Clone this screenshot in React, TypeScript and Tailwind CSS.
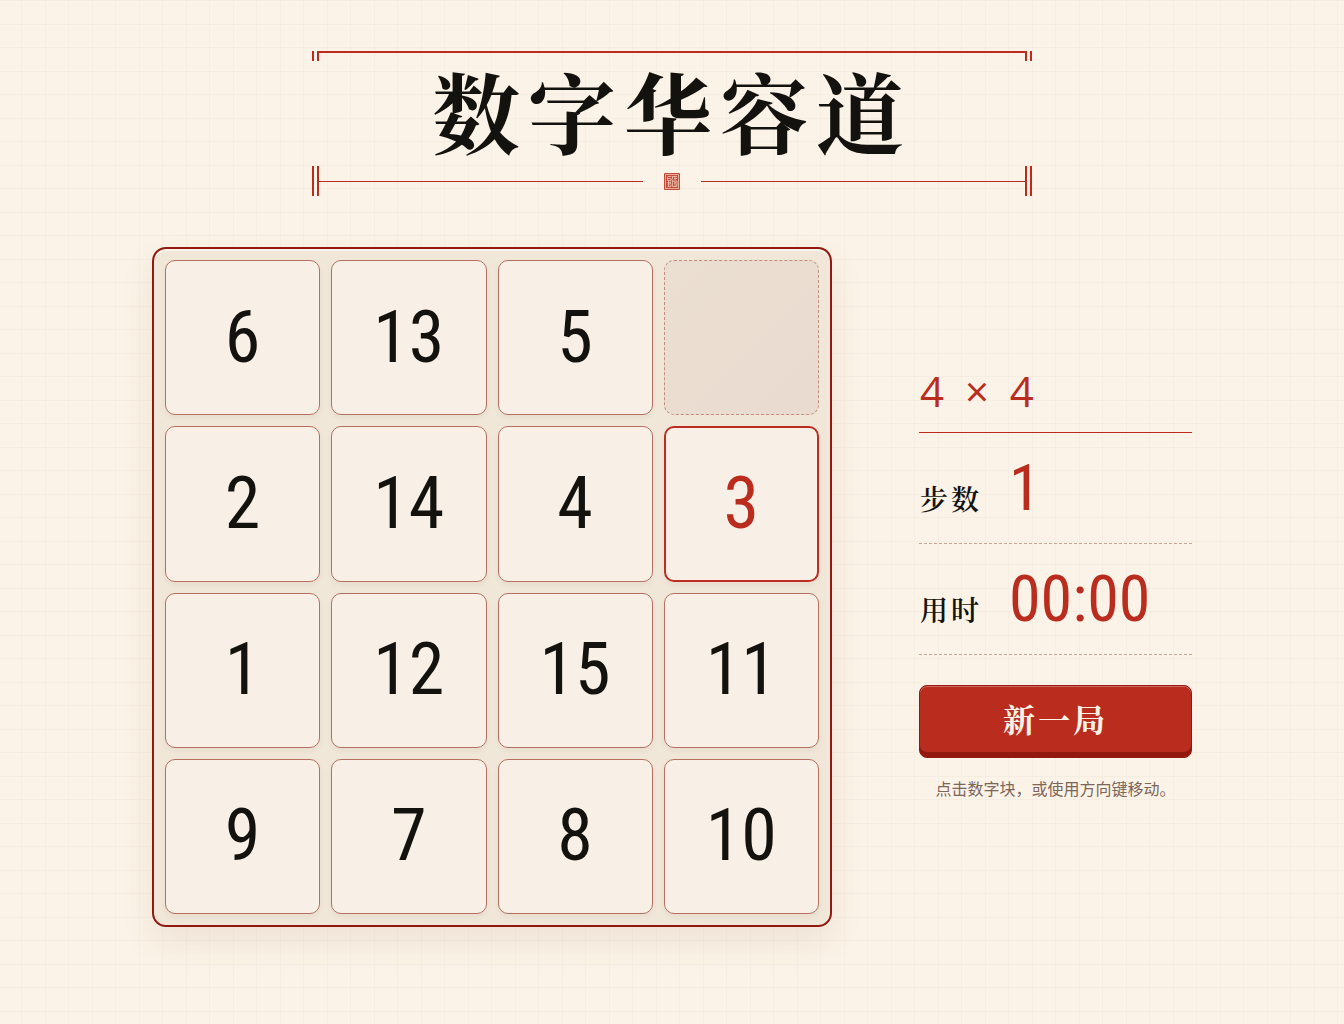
import { useCallback, useEffect, useState } from "react";

const SIZE = 4;
const START = [6, 13, 5, 0, 2, 14, 4, 3, 1, 12, 15, 11, 9, 7, 8, 10];

const areNeighbours = (a: number, b: number) => {
  const rows = Math.abs(Math.floor(a / SIZE) - Math.floor(b / SIZE));
  const cols = Math.abs((a % SIZE) - (b % SIZE));
  return rows + cols === 1;
};

function Posts({ className }: { className: string }) {
  return <span aria-hidden="true" className={`w-[7px] shrink-0 border-x-2 border-[#b92c1e] ${className}`} />;
}

function Seal() {
  return (
    <svg viewBox="0 0 16 17" className="mx-[21px] h-[17px] w-4 shrink-0" fill="none" aria-hidden="true">
      <rect width="16" height="17" rx="1" fill="#c64a3b" />
      <path
        d="M1.5 1.5h13v14h-13z M4 3.5h3.5 M3.5 5.5h3 M3.5 3.5v4h3.5v-2 M3.5 9.5h3 M4.5 8v6 M6.5 8.5v2.5h-3 M3.5 13.5h3.5v-2 M9 3.5h4 M10 5.5h3 M11 2.5v4.5 M8.5 3v3.5 M8.5 8v5.5h4.500V8z M10 10h2 M10 12h3 M11 8v3 M7.500 6.500l1.500 2"
        stroke="#ecc9b4"
        strokeWidth=".8"
      />
    </svg>
  );
}

function Header() {
  return (
    <header className="mx-auto w-full max-w-[720px]">
      <div className="flex items-start" aria-hidden="true">
        <Posts className="h-[10px]" />
        <span className="h-0.5 flex-1 bg-[#b92c1e]" />
        <Posts className="h-[10px]" />
      </div>
      <h1 className="pb-2 text-center text-[88px] leading-[97px] font-bold tracking-[8px] whitespace-nowrap">
        数字华容道
      </h1>
      <div className="flex items-center">
        <Posts className="h-[30px]" />
        <span className="h-px flex-1 bg-[#b92c1e]" />
        <Seal />
        <span className="h-px flex-1 bg-[#b92c1e]" />
        <Posts className="h-[30px]" />
      </div>
    </header>
  );
}

function Stat({ label, value }: { label: string; value: string }) {
  return (
    <div className="flex h-[111px] items-baseline border-b border-dashed border-[#cda597] pt-4">
      <dt className="w-[90px] pl-px text-[28px] leading-[80px] font-semibold tracking-[3px]">{label}</dt>
      <dd className="font-['Roboto_Condensed','Roboto',sans-serif] text-[64px] leading-[80px] text-[#b92c1e]">
        {value}
      </dd>
    </div>
  );
}

export default function App() {
  const [tiles, setTiles] = useState(START);
  const [moves, setMoves] = useState(1);
  const [last, setLast] = useState(3);
  const [seconds, setSeconds] = useState(0);
  const [running, setRunning] = useState(false);

  const move = useCallback(
    (index: number) => {
      const gap = tiles.indexOf(0);
      if (index < 0 || index >= tiles.length || !areNeighbours(index, gap)) return;
      const next = [...tiles];
      next[gap] = tiles[index];
      next[index] = 0;
      setTiles(next);
      setLast(tiles[index]);
      setMoves((n) => n + 1);
      setRunning(true);
    },
    [tiles],
  );

  useEffect(() => {
    const onKey = (e: KeyboardEvent) => {
      const offsets: Record<string, number> = { ArrowUp: SIZE, ArrowDown: -SIZE, ArrowLeft: 1, ArrowRight: -1 };
      if (e.key in offsets) {
        e.preventDefault();
        move(tiles.indexOf(0) + offsets[e.key]);
      }
    };
    window.addEventListener("keydown", onKey);
    return () => window.removeEventListener("keydown", onKey);
  }, [move, tiles]);

  useEffect(() => {
    if (!running) return;
    const id = window.setInterval(() => setSeconds((s) => s + 1), 1000);
    return () => window.clearInterval(id);
  }, [running]);

  const restart = () => {
    const next = [...START];
    for (let i = 0; i < 200; i++) {
      const gap = next.indexOf(0);
      const options = next.map((_, k) => k).filter((k) => areNeighbours(k, gap));
      const pick = options[Math.floor(Math.random() * options.length)];
      [next[gap], next[pick]] = [next[pick], next[gap]];
    }
    setTiles(next);
    setMoves(0);
    setLast(-1);
    setSeconds(0);
    setRunning(false);
  };

  const clock = [Math.floor(seconds / 60), seconds % 60].map((n) => String(n).padStart(2, "0")).join(":");

  return (
    <div
      lang="zh-CN"
      className="min-h-screen bg-[#fbf3e7] bg-[linear-gradient(#f6ede1_1px,transparent_1px),linear-gradient(#f6ede1_1px,transparent_1px),linear-gradient(90deg,#f7eee3_1px,transparent_1px),linear-gradient(90deg,#f7eee3_1px,transparent_1px)] bg-[size:47px_47px] bg-[position:0_0,0_24px,21px_0,45px_0] px-6 pt-[51px] pb-24 font-['Noto_Serif_CJK_SC','Noto_Sans_CJK_SC',serif] text-[#14120e]"
    >
      <Header />
      <main className="mx-auto mt-[51px] flex max-w-[1040px] flex-col items-center gap-x-[87px] gap-y-10 lg:flex-row">
        <div
          role="group"
          aria-label="棋盘"
          className="grid aspect-square w-full max-w-[680px] grid-cols-4 grid-rows-4 gap-[11px] rounded-[14px] border-2 border-[#92190f] bg-[#f0e7d9] p-[11px] shadow-[0_14px_32px_rgba(120,80,50,0.1),inset_0_2px_1px_rgba(255,250,240,0.8)]"
        >
          {tiles.map((n, i) =>
            n === 0 ? (
              <div
                key={n}
                className="rounded-[10px] border border-dashed border-[#c48d7e] bg-[#eaddd0] bg-linear-135 from-[#ebdfd2] to-[#e9dbcf]"
              />
            ) : (
              <button
                key={n}
                type="button"
                onClick={() => move(i)}
                className={`cursor-pointer rounded-[10px] bg-[#f8f0e6] font-['Roboto_Condensed','Roboto',sans-serif] text-[72px] leading-none shadow-[0_3px_5px_rgba(120,70,40,0.06)] ${
                  n === last ? "border-2 border-[#bd2d20] text-[#b92c1e]" : "border border-[#b5705f]"
                }`}
              >
                {n}
              </button>
            ),
          )}
        </div>

        <aside className="w-full max-w-[680px] lg:w-[273px] lg:shrink-0">
          <h2 className="h-[59px] border-b border-[#b92c1e] pl-px font-['Open_Sans',sans-serif] text-[42px] leading-[34px] font-normal tracking-[5px] whitespace-pre text-[#b92c1e]">
            4 × 4
          </h2>
          <dl>
            <Stat label="步数" value={String(moves)} />
            <Stat label="用时" value={clock} />
          </dl>
          <button
            type="button"
            onClick={restart}
            className="mt-[30px] h-[73px] w-full cursor-pointer rounded-lg border border-[#92190f] bg-[#b92c1e] pb-2 text-[32px] leading-none font-bold tracking-[3px] text-[#fcf3e7] shadow-[inset_0_-5px_0_#92190f,inset_0_1px_0_#cf6a5c]"
          >
            新一局
          </button>
          <p className="mt-[18px] text-center font-['Noto_Sans_CJK_SC',sans-serif] text-base leading-6 text-[#7d6558]">
            点击数字块，或使用方向键移动。
          </p>
        </aside>
      </main>
    </div>
  );
}
